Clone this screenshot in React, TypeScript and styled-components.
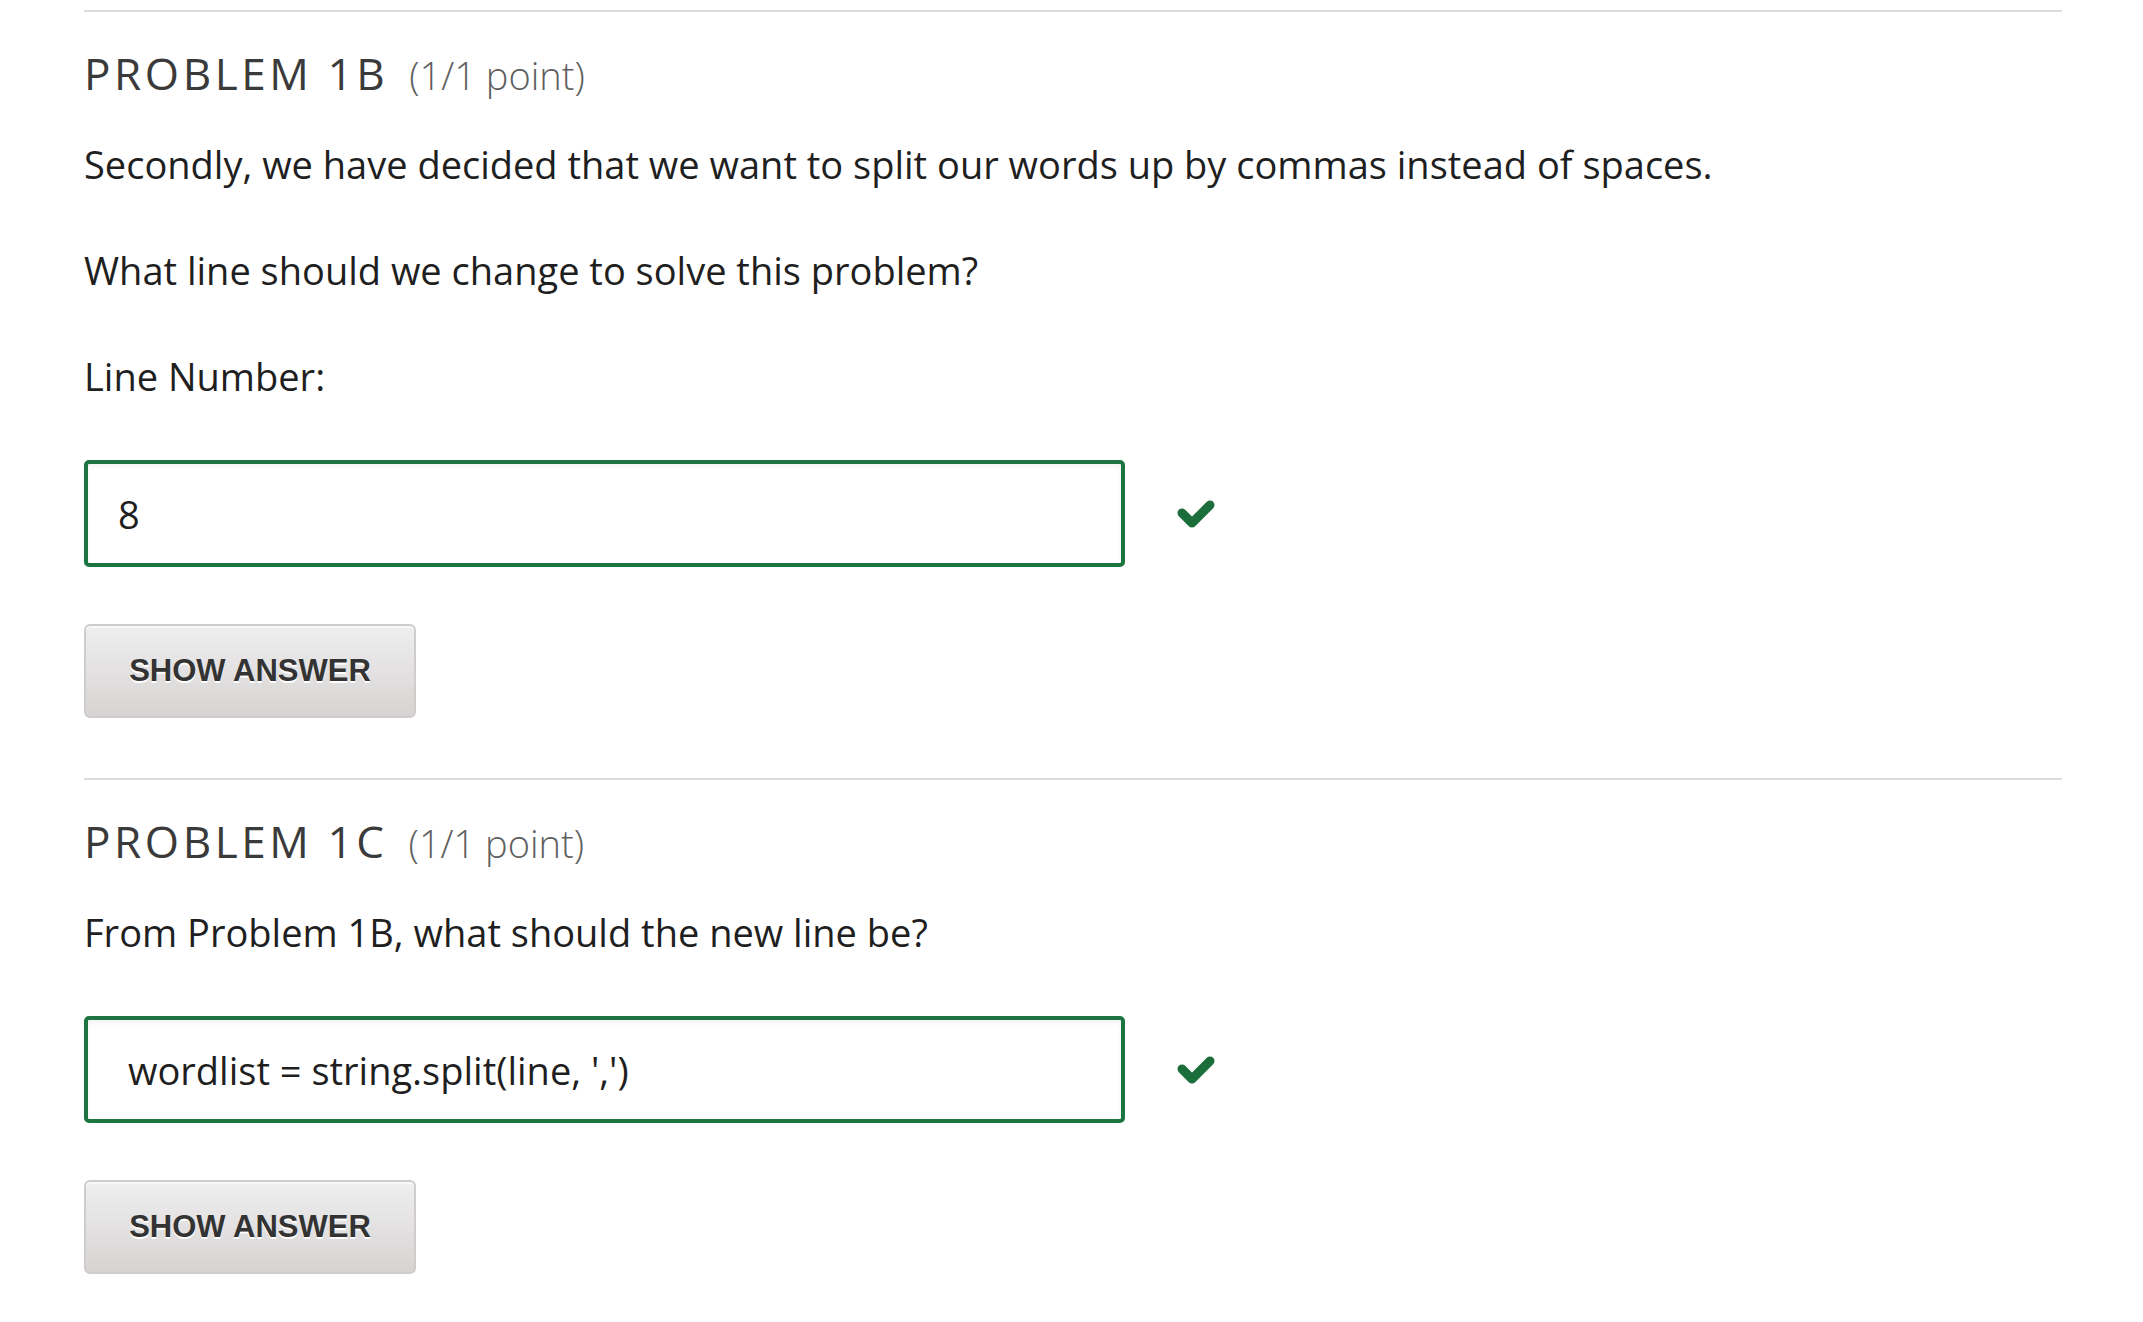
import styled, { createGlobalStyle } from 'styled-components';

const GlobalStyle = createGlobalStyle`
  body {
    margin: 0;
    background: #fff;
    font-family: 'Open Sans', 'Liberation Sans', sans-serif;
    color: #313131;
  }
`;

const Page = styled.div`
  padding: 10px 0 40px 84px;
  width: 1978px;
`;

const Section = styled.section`
  border-top: 2px solid #dedede;
  padding-bottom: 60px;
`;

const Heading = styled.h3`
  margin: 31px 0 0;
  font-size: 44px;
  line-height: 60px;
  font-weight: 400;
  letter-spacing: 3.6px;
  color: #3a3a3a;
  text-transform: uppercase;
`;

const Points = styled.span`
  margin-left: 21px;
  font-size: 38px;
  font-weight: 300;
  letter-spacing: 0;
  text-transform: none;
  color: #5f5f5f;
`;

const Text = styled.p<{ $gap: number }>`
  margin: ${(p) => p.$gap}px 0 0;
  font-size: 38px;
  line-height: 48px;
  color: #1f1f1f;
`;

const InputRow = styled.div`
  display: flex;
  align-items: center;
  gap: 51px;
  margin-top: 60px;
`;

const Field = styled.input<{ $inset: number }>`
  box-sizing: border-box;
  width: 1041px;
  height: 107px;
  padding: 0 ${(p) => p.$inset}px;
  border: 4px solid #1c7440;
  border-radius: 5px;
  box-shadow: inset 0 3px 4px rgba(0, 0, 0, 0.05);
  font-family: 'Open Sans', 'Liberation Sans', sans-serif;
  font-size: 38px;
  color: #1f1f1f;
  background: #fff;
  outline: none;
`;

const Check = styled.svg`
  width: 40px;
  height: 30px;
  color: #1b6e3a;
`;

const AnswerButton = styled.button`
  display: block;
  margin-top: 57px;
  width: 332px;
  height: 94px;
  border: 2px solid #d0cccc;
  border-radius: 6px;
  background: linear-gradient(#efefef, #d7d3d3);
  box-shadow: inset 0 2px 0 #f8f8f8;
  font-family: 'Liberation Sans', Arial, sans-serif;
  font-weight: 700;
  font-size: 31px;
  color: #333;
  text-shadow: 0 2px 0 #fff;
  cursor: pointer;
`;

const CheckIcon = () => (
  <Check viewBox="0 0 40 30">
    <polyline
      points="6,14 16,24 34,6"
      fill="none"
      stroke="currentColor"
      strokeWidth="9"
      strokeLinecap="round"
      strokeLinejoin="round"
    />
  </Check>
);

type ProblemProps = {
  title: string;
  lines: string[];
  value: string;
  inset: number;
};

const Problem = ({ title, lines, value, inset }: ProblemProps) => (
  <Section>
    <Heading>
      {title}
      <Points>(1/1 point)</Points>
    </Heading>
    {lines.map((line, i) => (
      <Text key={i} $gap={i === 0 ? 35 : 58}>
        {line}
      </Text>
    ))}
    <InputRow>
      <Field readOnly value={value} $inset={inset} />
      <CheckIcon />
    </InputRow>
    <AnswerButton>SHOW ANSWER</AnswerButton>
  </Section>
);

export default function App() {
  return (
    <Page>
      <GlobalStyle />
      <Problem
        title="Problem 1B"
        lines={[
          'Secondly, we have decided that we want to split our words up by commas instead of spaces.',
          'What line should we change to solve this problem?',
          'Line Number:',
        ]}
        value="8"
        inset={30}
      />
      <Problem
        title="Problem 1C"
        lines={['From Problem 1B, what should the new line be?']}
        value="wordlist = string.split(line, ',')"
        inset={40}
      />
    </Page>
  );
}
